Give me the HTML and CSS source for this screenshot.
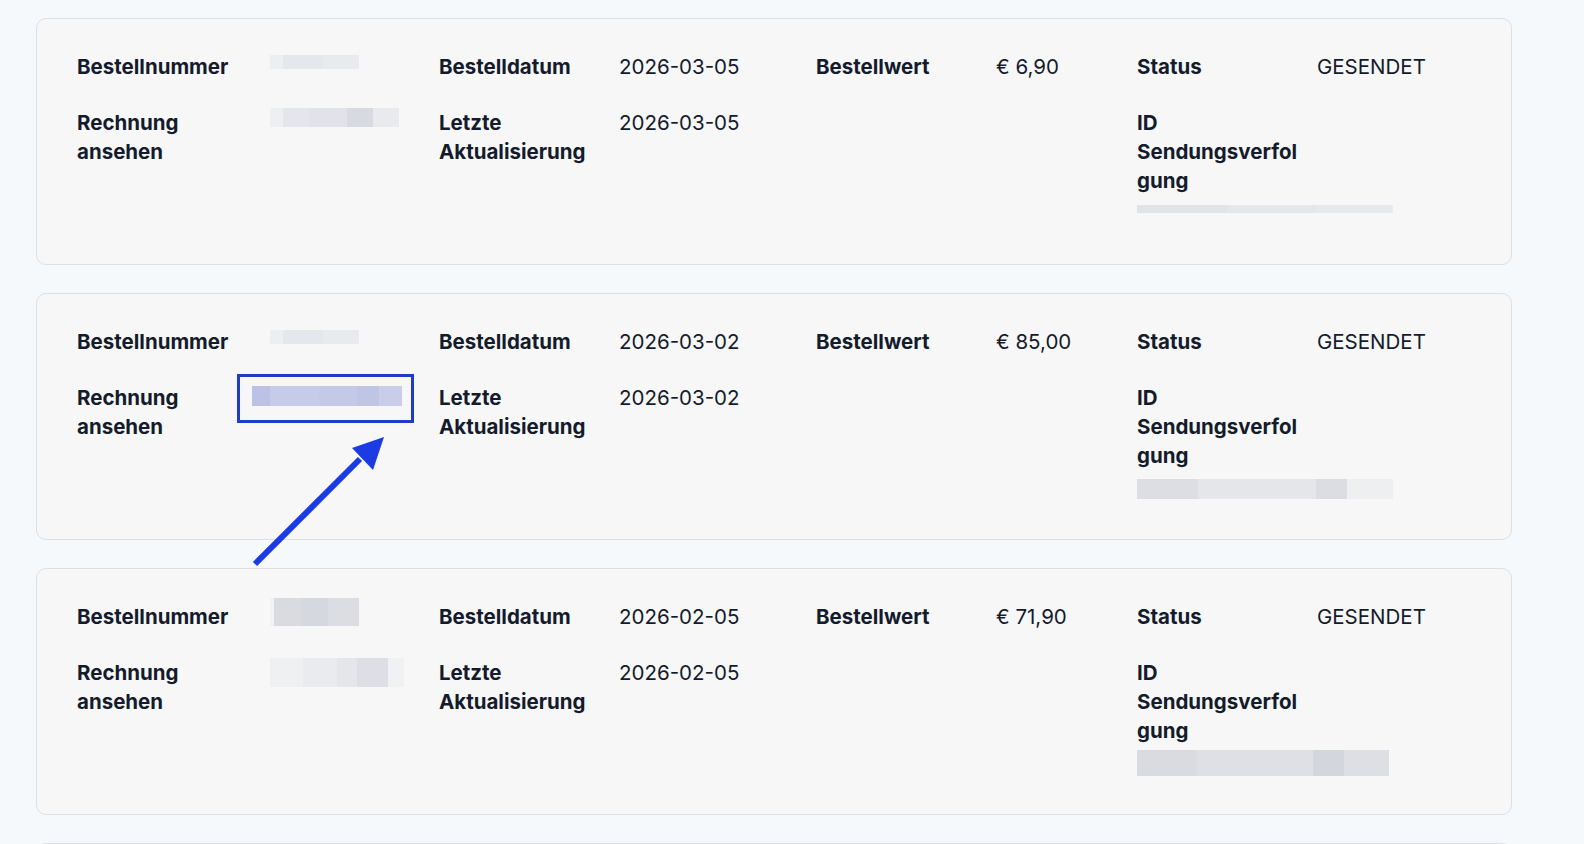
FILE: index.html
```html
<!DOCTYPE html>
<html lang="de">
<head>
<meta charset="utf-8">
<title>Bestellungen</title>
<link rel="stylesheet" href="styles.css">
</head>
<body>
<main class="orders">

  <section class="order">
    <div class="pair">
      <div class="label">Bestellnummer</div>
      <div class="value"><span class="redact r-num r-faint"></span></div>
    </div>
    <div class="pair">
      <div class="label">Bestelldatum</div>
      <div class="value">2026-03-05</div>
    </div>
    <div class="pair">
      <div class="label">Bestellwert</div>
      <div class="value">€ 6,90</div>
    </div>
    <div class="pair">
      <div class="label">Status</div>
      <div class="value">GESENDET</div>
    </div>
    <div class="pair">
      <div class="label">Rechnung ansehen</div>
      <div class="value"><span class="redact r-link r-soft"></span></div>
    </div>
    <div class="pair">
      <div class="label">Letzte Aktualisierung</div>
      <div class="value">2026-03-05</div>
    </div>
    <div class="pair"></div>
    <div class="pair">
      <div class="label">ID Sendungsverfolgung</div>
      <div class="value track"><span class="redact r-track r-thin"></span></div>
    </div>
  </section>

  <section class="order">
    <div class="pair">
      <div class="label">Bestellnummer</div>
      <div class="value"><span class="redact r-num r-faint"></span></div>
    </div>
    <div class="pair">
      <div class="label">Bestelldatum</div>
      <div class="value">2026-03-02</div>
    </div>
    <div class="pair">
      <div class="label">Bestellwert</div>
      <div class="value">€ 85,00</div>
    </div>
    <div class="pair">
      <div class="label">Status</div>
      <div class="value">GESENDET</div>
    </div>
    <div class="pair">
      <div class="label">Rechnung ansehen</div>
      <div class="value marked"><span class="redact r-link r-blue"></span><span class="highlight"></span></div>
    </div>
    <div class="pair">
      <div class="label">Letzte Aktualisierung</div>
      <div class="value">2026-03-02</div>
    </div>
    <div class="pair"></div>
    <div class="pair">
      <div class="label">ID Sendungsverfolgung</div>
      <div class="value track"><span class="redact r-track r-mid"></span></div>
    </div>
  </section>

  <section class="order">
    <div class="pair">
      <div class="label">Bestellnummer</div>
      <div class="value"><span class="redact r-num r-dark"></span></div>
    </div>
    <div class="pair">
      <div class="label">Bestelldatum</div>
      <div class="value">2026-02-05</div>
    </div>
    <div class="pair">
      <div class="label">Bestellwert</div>
      <div class="value">€ 71,90</div>
    </div>
    <div class="pair">
      <div class="label">Status</div>
      <div class="value">GESENDET</div>
    </div>
    <div class="pair">
      <div class="label">Rechnung ansehen</div>
      <div class="value"><span class="redact r-link r-tall"></span></div>
    </div>
    <div class="pair">
      <div class="label">Letzte Aktualisierung</div>
      <div class="value">2026-02-05</div>
    </div>
    <div class="pair"></div>
    <div class="pair">
      <div class="label">ID Sendungsverfolgung</div>
      <div class="value track"><span class="redact r-track r-big"></span></div>
    </div>
  </section>

  <section class="order"></section>

  <svg class="arrow" width="200" height="160" viewBox="0 0 200 160" aria-hidden="true">
    <line x1="55" y1="154" x2="160" y2="49" stroke="#1c3be2" stroke-width="6"/>
    <polygon points="184,27 152,38 173,60" fill="#1c3be2"/>
  </svg>
</main>
</body>
</html>
```

FILE: styles.css
```css
html, body {
  margin: 0;
  padding: 0;
  overflow: hidden;
}

body {
  background: #f5f9fc;
  color: #141b2c;
  font-family: "Inter", "Noto Sans", sans-serif;
  font-size: 20.5px;
  line-height: 29px;
}

.orders {
  position: relative;
  width: 1476px;
  margin: 18px 0 0 36px;
  display: flex;
  flex-direction: column;
  gap: 28px;
}

.order {
  background: #f7f7f7;
  border: 1px solid #dcdfe4;
  border-radius: 10px;
  padding: 33px 40px 40px;
  display: grid;
  grid-template-columns: 362px 377px 321px 1fr;
  row-gap: 27px;
  min-height: 166px;
}

.pair {
  display: flex;
  flex-wrap: wrap;
  column-gap: 16px;
  align-items: flex-start;
}

.label {
  flex: 0 0 164px;
  font-weight: 700;
  overflow-wrap: anywhere;
}

.value {
  position: relative;
  font-weight: 400;
  min-height: 29px;
}

.value.track {
  flex: 0 0 260px;
  height: 29px;
}

.redact {
  display: block;
}

.r-num {
  width: 89px;
  height: 14px;
  margin: 3px 0 0 13px;
}

.r-faint {
  background: linear-gradient(90deg, #eceef1 0 15%, #e6e7ec 15% 60%, #e9eaee 60% 100%);
}

.r-dark {
  height: 28px;
  margin-top: -4px;
  background: linear-gradient(90deg, #f1f2f4 0 4%, #d9dbe1 4% 35%, #d6d8df 35% 65%, #dbdde2 65% 100%);
}

.r-link {
  width: 129px;
  height: 19px;
  margin: 0 0 0 13px;
}

.r-soft {
  background: linear-gradient(90deg, #eeeff2 0 10%, #e5e6eb 10% 30%, #e2e3e9 30% 60%, #d8dae2 60% 80%, #e9eaee 80% 100%);
}

.r-blue {
  width: 150px;
  height: 20px;
  margin: 3px 0 0 -5px;
  background: linear-gradient(90deg, #bcc2e6 0 12%, #c6cbea 12% 45%, #c4c9e8 45% 70%, #bfc5e4 70% 85%, #c9cdea 85% 100%);
}

.r-tall {
  height: 29px;
  width: 134px;
  background: linear-gradient(90deg, #eff0f2 0 25%, #eaebee 25% 50%, #e5e6ea 50% 65%, #dedfe4 65% 88%, #f0f1f2 88% 100%);
}

.highlight {
  position: absolute;
  left: -20px;
  top: -9px;
  width: 171px;
  height: 43px;
  border: 3px solid #1f3dc4;
}

.r-track {
  width: 256px;
}

.r-thin {
  height: 8px;
  margin-top: 10px;
  background: linear-gradient(90deg, #e2e3e8 0 35%, #e5e6ea 35% 70%, #e8e9ec 70% 100%);
}

.r-mid {
  height: 20px;
  margin-top: 9px;
  background: linear-gradient(90deg, #dcdee3 0 24%, #e5e6ea 24% 70%, #dcdde2 70% 82%, #eeeff1 82% 100%);
}

.r-big {
  height: 26px;
  margin-top: 5px;
  width: 252px;
  background: linear-gradient(90deg, #d9dbe1 0 24%, #dfe0e5 24% 70%, #d4d6dd 70% 82%, #dedfe4 82% 100%);
}

.arrow {
  position: absolute;
  left: 164px;
  top: 392px;
  overflow: visible;
}
```
